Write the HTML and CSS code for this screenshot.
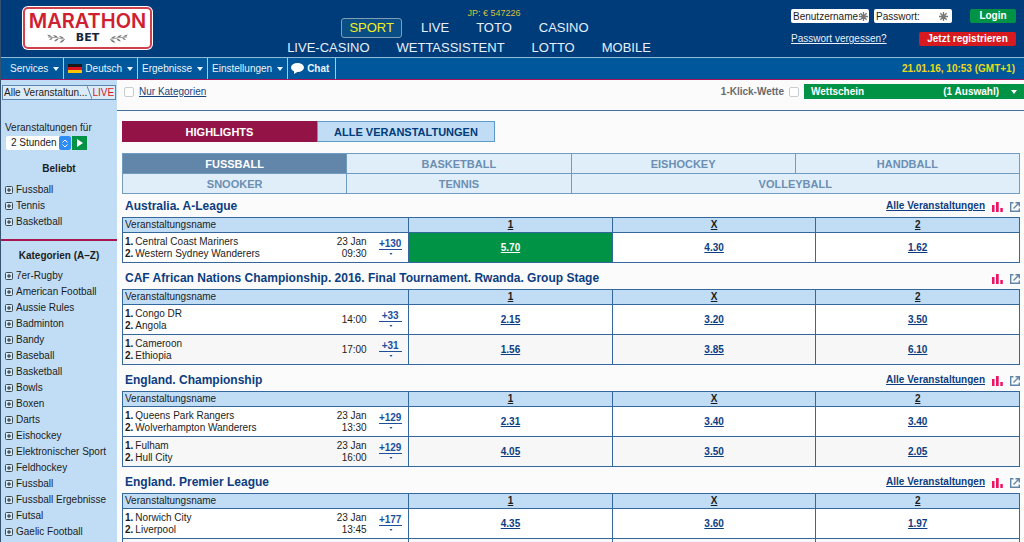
FILE: index.html
```html
<!DOCTYPE html>
<html lang="de">
<head>
<meta charset="utf-8">
<title>Marathonbet – Sport</title>
<link rel="stylesheet" href="styles.css">
</head>
<body>
<svg class="defs" width="0" height="0" aria-hidden="true">
  <symbol id="plus" viewBox="0 0 8 8"><rect x=".5" y=".5" width="7" height="7" rx="1" fill="#d5e8f8" stroke="#3c4a56"/><path d="M2 4h4M4 2v4" stroke="#1c2830"/></symbol>
  <symbol id="bars" viewBox="0 0 11 11"><path d="M0 4h2.500v7H0zM4 1h2.700v10H4zM8.300 7h2.500v4H8.300z" fill="#ee1464"/></symbol>
  <symbol id="open" viewBox="0 0 10 10"><path d="M3.500 .7H.7v8.600h8.600V6.500" fill="none" stroke="#6286a8" stroke-width="1.400"/><path d="M5.500 .7h3.800v3.800M9 1L3.500 6.500" fill="none" stroke="#6286a8" stroke-width="1.400"/></symbol>
  <symbol id="down" viewBox="0 0 6 4"><path d="M0 0h6L3 4z" fill="currentColor"/></symbol>
  <symbol id="star" viewBox="0 0 10 10"><path d="M5 0v10M0 5h10M1.500 1.500l7 7M8.500 1.500l-7 7" stroke="#777" stroke-width="1.500"/></symbol>
  <symbol id="laurel" viewBox="0 0 20 9"><path d="M2 3Q10 3 19 5.500" fill="none" stroke="#777" stroke-width=".7"/><path d="M1 .5Q4.500 .5 6 3Q2.500 3 1 .5zM7 1Q10.500 1 12 3.800Q8.500 3.500 7 1zM13 2Q16.500 2 18 4.800Q14.500 4.500 13 2zM3 6Q4.500 3.500 7 3.500Q6 6.200 3 6zM8 7.300Q9.500 4.700 12.500 4.500Q11.500 7.500 8 7.300zM13.500 8.600Q15 5.800 18.500 5.500Q17.500 8.800 13.500 8.600z" fill="#777"/></symbol>
</svg>

<div class="page">
  <header class="header">
    <a class="logo" href="#">
      <span class="logo-name">MARATHON</span>
      <span class="logo-sub"><svg width="20" height="9"><use href="#laurel"/></svg><b>BET</b><svg class="flip" width="20" height="9"><use href="#laurel"/></svg></span>
    </a>
    <nav class="main-nav" aria-label="Hauptmenü">
      <ul>
        <li><a class="active" href="#">SPORT</a></li>
        <li><a href="#">LIVE</a></li>
        <li class="jackpot-item"><span class="jackpot">JP: € 547226</span><a href="#">TOTO</a></li>
        <li><a href="#">CASINO</a></li>
      </ul>
      <ul>
        <li><a href="#">LIVE-CASINO</a></li>
        <li><a href="#">WETTASSISTENT</a></li>
        <li><a href="#">LOTTO</a></li>
        <li><a href="#">MOBILE</a></li>
      </ul>
    </nav>
    <form class="login">
      <div class="login-row">
        <div class="fields">
          <label class="field"><input type="text" placeholder="Benutzername:" aria-label="Benutzername"><svg class="star" width="9" height="9"><use href="#star"/></svg></label>
          <label class="field"><input type="password" placeholder="Passwort:" aria-label="Passwort"><svg class="star inset" width="9" height="9"><use href="#star"/></svg></label>
        </div>
        <button class="btn green" type="button">Login</button>
      </div>
      <div class="login-row">
        <a class="forgot" href="#">Passwort vergessen?</a>
        <button class="btn red" type="button">Jetzt registrieren</button>
      </div>
    </form>
  </header>

  <div class="menu">
    <button type="button">Services<svg width="6" height="4"><use href="#down"/></svg></button>
    <button type="button"><span class="flag"></span>Deutsch<svg width="6" height="4"><use href="#down"/></svg></button>
    <button type="button">Ergebnisse<svg width="6" height="4"><use href="#down"/></svg></button>
    <button type="button">Einstellungen<svg width="6" height="4"><use href="#down"/></svg></button>
    <button type="button" class="chat"><svg width="13" height="11" viewBox="0 0 13 11"><ellipse cx="6.500" cy="4.500" rx="6.500" ry="4.500" fill="#fff"/><path d="M3 7v4l5-3z" fill="#fff"/></svg>Chat</button>
    <time class="clock">21.01.16, 10:53 (GMT+1)</time>
  </div>

  <div class="body">
    <aside class="sidebar">
      <div class="scope"><a href="#">Alle Veranstaltun...</a><svg width="5" height="13" viewBox="0 0 5 13"><path d="M0 0l5 13" stroke="#5b86ad"/></svg><a class="live" href="#">LIVE</a></div>
      <form class="within">
        <label for="hours">Veranstaltungen für</label>
        <div class="within-row">
          <span class="select"><select id="hours"><option>2 Stunden</option></select><span class="stepper"><svg width="6" height="9" viewBox="0 0 6 9"><path d="M.5 3.500L3 1l2.500 2.500M.5 5.500L3 8l2.500-2.500" fill="none" stroke="#fff"/></svg></span></span>
          <button type="button" class="go" aria-label="Anzeigen"><svg width="6" height="8" viewBox="0 0 6 8"><path d="M0 0l6 4-6 4z" fill="#fff"/></svg></button>
        </div>
      </form>
      <h2>Beliebt</h2>
      <ul>
        <li><a href="#"><svg width="8" height="8"><use href="#plus"/></svg>Fussball</a></li>
        <li><a href="#"><svg width="8" height="8"><use href="#plus"/></svg>Tennis</a></li>
        <li><a href="#"><svg width="8" height="8"><use href="#plus"/></svg>Basketball</a></li>
      </ul>
      <h2 class="divided">Kategorien (A–Z)</h2>
      <ul>
        <li><a href="#"><svg width="8" height="8"><use href="#plus"/></svg>7er-Rugby</a></li>
        <li><a href="#"><svg width="8" height="8"><use href="#plus"/></svg>American Football</a></li>
        <li><a href="#"><svg width="8" height="8"><use href="#plus"/></svg>Aussie Rules</a></li>
        <li><a href="#"><svg width="8" height="8"><use href="#plus"/></svg>Badminton</a></li>
        <li><a href="#"><svg width="8" height="8"><use href="#plus"/></svg>Bandy</a></li>
        <li><a href="#"><svg width="8" height="8"><use href="#plus"/></svg>Baseball</a></li>
        <li><a href="#"><svg width="8" height="8"><use href="#plus"/></svg>Basketball</a></li>
        <li><a href="#"><svg width="8" height="8"><use href="#plus"/></svg>Bowls</a></li>
        <li><a href="#"><svg width="8" height="8"><use href="#plus"/></svg>Boxen</a></li>
        <li><a href="#"><svg width="8" height="8"><use href="#plus"/></svg>Darts</a></li>
        <li><a href="#"><svg width="8" height="8"><use href="#plus"/></svg>Eishockey</a></li>
        <li><a href="#"><svg width="8" height="8"><use href="#plus"/></svg>Elektronischer Sport</a></li>
        <li><a href="#"><svg width="8" height="8"><use href="#plus"/></svg>Feldhockey</a></li>
        <li><a href="#"><svg width="8" height="8"><use href="#plus"/></svg>Fussball</a></li>
        <li><a href="#"><svg width="8" height="8"><use href="#plus"/></svg>Fussball Ergebnisse</a></li>
        <li><a href="#"><svg width="8" height="8"><use href="#plus"/></svg>Futsal</a></li>
        <li><a href="#"><svg width="8" height="8"><use href="#plus"/></svg>Gaelic Football</a></li>
      </ul>
    </aside>

    <main class="main">
      <div class="toolbar">
        <label class="check"><input type="checkbox"><span class="link">Nur Kategorien</span></label>
        <label class="check one-click">1-Klick-Wette<input type="checkbox"></label>
        <button type="button" class="betslip"><span>Wettschein</span><span class="count">(1 Auswahl)</span><svg width="6" height="4"><use href="#down"/></svg></button>
      </div>
      <div class="content">
        <div class="tabs">
          <button type="button" class="tab active">HIGHLIGHTS</button>
          <button type="button" class="tab">ALLE VERANSTALTUNGEN</button>
        </div>
        <div class="sports">
          <button type="button" class="active">FUSSBALL</button>
          <button type="button">BASKETBALL</button>
          <button type="button">EISHOCKEY</button>
          <button type="button">HANDBALL</button>
          <button type="button">SNOOKER</button>
          <button type="button">TENNIS</button>
          <button type="button" class="wide">VOLLEYBALL</button>
        </div>

        <section class="league">
          <div class="league-head"><h3>Australia. A-League</h3><a href="#">Alle Veranstaltungen</a><svg width="11" height="11"><use href="#bars"/></svg><svg width="10" height="10"><use href="#open"/></svg></div>
          <table>
            <colgroup><col><col class="c-date"><col class="c-more"><col class="c-odd"><col class="c-odd"><col class="c-odd"></colgroup>
            <thead><tr><th colspan="3" class="name">Veranstaltungsname</th><th>1</th><th>X</th><th>2</th></tr></thead>
            <tbody>
              <tr><td class="teams"><b>1.</b>Central Coast Mariners<br><b>2.</b>Western Sydney Wanderers</td><td class="date">23 Jan<br>09:30</td><td class="more"><a href="#">+130</a><svg width="4" height="2"><use href="#down"/></svg></td><td class="odd picked"><a href="#">5.70</a></td><td class="odd"><a href="#">4.30</a></td><td class="odd"><a href="#">1.62</a></td></tr>
            </tbody>
          </table>
        </section>

        <section class="league">
          <div class="league-head"><h3>CAF African Nations Championship. 2016. Final Tournament. Rwanda. Group Stage</h3><svg width="11" height="11"><use href="#bars"/></svg><svg width="10" height="10"><use href="#open"/></svg></div>
          <table>
            <colgroup><col><col class="c-date"><col class="c-more"><col class="c-odd"><col class="c-odd"><col class="c-odd"></colgroup>
            <thead><tr><th colspan="3" class="name">Veranstaltungsname</th><th>1</th><th>X</th><th>2</th></tr></thead>
            <tbody>
              <tr><td class="teams"><b>1.</b>Congo DR<br><b>2.</b>Angola</td><td class="date">14:00</td><td class="more"><a href="#">+33</a><svg width="4" height="2"><use href="#down"/></svg></td><td class="odd"><a href="#">2.15</a></td><td class="odd"><a href="#">3.20</a></td><td class="odd"><a href="#">3.50</a></td></tr>
              <tr><td class="teams"><b>1.</b>Cameroon<br><b>2.</b>Ethiopia</td><td class="date">17:00</td><td class="more"><a href="#">+31</a><svg width="4" height="2"><use href="#down"/></svg></td><td class="odd"><a href="#">1.56</a></td><td class="odd"><a href="#">3.85</a></td><td class="odd"><a href="#">6.10</a></td></tr>
            </tbody>
          </table>
        </section>

        <section class="league">
          <div class="league-head"><h3>England. Championship</h3><a href="#">Alle Veranstaltungen</a><svg width="11" height="11"><use href="#bars"/></svg><svg width="10" height="10"><use href="#open"/></svg></div>
          <table>
            <colgroup><col><col class="c-date"><col class="c-more"><col class="c-odd"><col class="c-odd"><col class="c-odd"></colgroup>
            <thead><tr><th colspan="3" class="name">Veranstaltungsname</th><th>1</th><th>X</th><th>2</th></tr></thead>
            <tbody>
              <tr><td class="teams"><b>1.</b>Queens Park Rangers<br><b>2.</b>Wolverhampton Wanderers</td><td class="date">23 Jan<br>13:30</td><td class="more"><a href="#">+129</a><svg width="4" height="2"><use href="#down"/></svg></td><td class="odd"><a href="#">2.31</a></td><td class="odd"><a href="#">3.40</a></td><td class="odd"><a href="#">3.40</a></td></tr>
              <tr><td class="teams"><b>1.</b>Fulham<br><b>2.</b>Hull City</td><td class="date">23 Jan<br>16:00</td><td class="more"><a href="#">+129</a><svg width="4" height="2"><use href="#down"/></svg></td><td class="odd"><a href="#">4.05</a></td><td class="odd"><a href="#">3.50</a></td><td class="odd"><a href="#">2.05</a></td></tr>
            </tbody>
          </table>
        </section>

        <section class="league">
          <div class="league-head"><h3>England. Premier League</h3><a href="#">Alle Veranstaltungen</a><svg width="11" height="11"><use href="#bars"/></svg><svg width="10" height="10"><use href="#open"/></svg></div>
          <table>
            <colgroup><col><col class="c-date"><col class="c-more"><col class="c-odd"><col class="c-odd"><col class="c-odd"></colgroup>
            <thead><tr><th colspan="3" class="name">Veranstaltungsname</th><th>1</th><th>X</th><th>2</th></tr></thead>
            <tbody>
              <tr><td class="teams"><b>1.</b>Norwich City<br><b>2.</b>Liverpool</td><td class="date">23 Jan<br>13:45</td><td class="more"><a href="#">+177</a><svg width="4" height="2"><use href="#down"/></svg></td><td class="odd"><a href="#">4.35</a></td><td class="odd"><a href="#">3.60</a></td><td class="odd"><a href="#">1.97</a></td></tr>
              <tr><td class="teams"></td><td class="date"></td><td class="more"></td><td class="odd"></td><td class="odd"></td><td class="odd"></td></tr>
            </tbody>
          </table>
        </section>
      </div>
    </main>
  </div>
</div>
</body>
</html>
```

FILE: styles.css
```css
* { box-sizing: border-box; }

body {
  margin: 0;
  font: 10px/12px "Liberation Sans", Arial, sans-serif;
  color: #1c1c1c;
  background: #fbfbfb;
}

.defs { position: absolute; }
ul { list-style: none; margin: 0; padding: 0; }
h2, h3 { margin: 0; }
a { color: inherit; text-decoration: none; }
button, input, select { font: inherit; margin: 0; padding: 0; border: 0; }
svg { flex: none; }

.page {
  display: flex;
  flex-direction: column;
  height: 100vh;
  overflow: hidden;
  border-left: 1px solid #35536f;
}

/* Header */
.header {
  flex: none;
  display: grid;
  grid-template-columns: 155px 1fr 244px;
  height: 57px;
  background: #003b7a;
  color: #e6f1fa;
}

.logo {
  display: flex;
  flex-direction: column;
  align-items: center;
  align-self: start;
  gap: 1px;
  margin: 7px 4px 0 22px;
  padding: 2px 0 3px;
  border: 2px solid #d2404e;
  border-radius: 5px;
  background: #fff;
  box-shadow: 0 0 0 1px #fff;
}
.logo-name { font: 600 20px/20px Inter, sans-serif; color: #cf2030; }
.logo-sub { display: flex; align-items: center; gap: 10px; color: #16263c; }
.logo-sub b { font: bold 11px/12px "DejaVu Sans", sans-serif; }
.flip { transform: scaleX(-1); }

.main-nav { padding: 18px 0 0 2px; font-size: 13px; line-height: 18px; }
.main-nav ul { display: flex; justify-content: center; gap: 11px; }
.main-nav a { display: block; padding: 0 7px; border: 1px solid transparent; border-radius: 3px; }
.main-nav .active { color: #f0f020; border-color: #7f9fb5; background: #0b4d85; }
.jackpot-item { position: relative; }
.jackpot {
  position: absolute;
  bottom: 100%;
  left: 50%;
  transform: translate(-50%, 1px);
  white-space: nowrap;
  font-size: 9px;
  line-height: 12px;
  color: #d2c23c;
}

.login { display: flex; flex-direction: column; gap: 9px; padding: 9px 8px 0 11px; }
.login-row { display: flex; justify-content: space-between; align-items: center; }
.fields { display: flex; gap: 5px; }
.field { position: relative; display: flex; width: 78px; }
.field input { width: 100%; height: 14px; padding: 0 2px; border-radius: 2px; background: #fff; }
.field input::placeholder { color: #1c1c1c; opacity: 1; }
.star { position: absolute; right: 1px; top: 3px; }
.star.inset { right: 4px; }
.btn { height: 14px; border-radius: 2px; color: #fff; font-weight: bold; }
.green { width: 46px; background: #009245; }
.red { width: 97px; background: #d71920; }
.forgot { text-decoration: underline; }

/* Menu strip */
.menu {
  flex: none;
  display: flex;
  border-top: 1px solid #8fbbd8;
  border-bottom: 1px solid #a8165a;
  height: 23px;
  background: #00579c;
}
.menu button {
  display: flex;
  align-items: center;
  gap: 5px;
  padding: 0 4px;
  border-right: 1px solid #a9cbe2;
  background: none;
  color: #eaf4fb;
}
.menu button:first-child { padding-left: 9px; }
.menu .chat { gap: 3px; padding: 0 6px 0 3px; font-weight: bold; }
.flag {
  width: 14px;
  height: 9px;
  margin-right: -2px;
  background: linear-gradient(#1a1a1a 33%, #d9141e 33% 66%, #f7c600 66%);
}
.clock { margin-left: auto; align-self: center; padding-right: 9px; font-weight: bold; color: #ecd91c; }

.body { flex: 1; display: flex; min-height: 0; }

/* Sidebar */
.sidebar { flex: none; width: 116px; overflow: hidden; background: #c1ddf5; }
.scope {
  display: flex;
  justify-content: space-between;
  margin: 5px 1px 0 1px;
  padding: 0 2px 0 1px;
  border: 1px solid #5b86ad;
  background: #dcebf8;
  line-height: 13px;
  white-space: nowrap;
}
.scope .live { color: #d71920; }
.within { padding: 22px 4px 0; }
.within-row { display: flex; gap: 1px; padding-left: 1px; margin-top: 2px; }
.select { position: relative; display: flex; width: 65px; height: 14px; background: #fff; border-radius: 2px; }
.select select { appearance: none; width: 100%; padding-left: 5px; background: none; color: #1c1c1c; }
.stepper {
  position: absolute;
  right: 0;
  top: 0;
  display: grid;
  place-items: center;
  width: 12px;
  height: 14px;
  border-radius: 2px;
  background: #2f8df5;
  pointer-events: none;
}
.go { display: grid; place-items: center; width: 15px; height: 14px; background: #009245; }
.sidebar h2 { padding: 13px 0; font-size: 10px; line-height: 12px; text-align: center; }
.sidebar h2 + ul { margin-top: -6px; }
.sidebar h2.divided { margin-top: 9px; padding: 9px 0 12px; border-top: 2px solid #a8164f; }
.sidebar li { line-height: 16px; }
.sidebar li a { display: flex; align-items: center; gap: 3px; padding-left: 4px; white-space: nowrap; }

/* Main column */
.main { flex: 1; min-width: 0; overflow: hidden; }
.toolbar {
  display: flex;
  align-items: center;
  height: 31px;
  padding: 0 0 7px 7px;
  border-bottom: 1px solid #46709c;
}
.check { display: flex; align-items: center; gap: 5px; }
.check input { appearance: none; width: 10px; height: 10px; border: 1px solid #c9cdd2; border-radius: 2px; background: #fff; }
.link { color: #17457c; text-decoration: underline; }
.one-click { margin-left: auto; padding-right: 5px; font-weight: bold; color: #6a6a6a; }
.betslip {
  display: flex;
  align-items: center;
  width: 220px;
  height: 15px;
  padding: 0 7px;
  background: #009245;
  color: #fff;
  font-weight: bold;
}
.count { margin-left: auto; padding-right: 12px; }

.content { padding: 10px 4px 0 5px; }
.tabs { display: flex; font-size: 11px; font-weight: bold; }
.tab {
  width: 178px;
  height: 21px;
  border: 1px solid #5e9ac6;
  background: #c1ddf5;
  color: #003b7a;
  font-size: 11px;
}
.tab.active { width: 195px; border-color: #931347; background: #931347; color: #fff; }

.sports {
  display: grid;
  grid-template-columns: repeat(4, 1fr);
  gap: 1px;
  margin-top: 11px;
  border: 1px solid #6f9cc0;
  background: #6f9cc0;
}
.sports button { height: 19px; background: #e0eefa; color: #6b8eb2; font-size: 11px; font-weight: bold; }
.sports .active { background: #6286aa; color: #fff; }
.sports .wide { grid-column: span 2; }

/* Leagues */
.league + .league { margin-top: 3px; }
.league-head { display: flex; align-items: center; height: 23px; padding-left: 3px; gap: 7px; }
.league-head h3 { flex: 1; font-size: 12px; line-height: 14px; color: #0d3d80; }
.league-head a { font-weight: bold; color: #0d3d80; text-decoration: underline; }
.league-head svg { margin-top: 2px; }

table { width: 100%; table-layout: fixed; border-collapse: collapse; border: 1px solid #34689c; }
th, td { padding: 0; }
th { line-height: 14px; border: 1px solid #34689c; background: #c1ddf5; text-decoration: underline; }
th.name { padding-left: 2px; text-align: left; font-weight: normal; text-decoration: none; }
tbody tr { height: 30px; background: #fff; border-top: 1px solid #34689c; }
tbody tr:nth-child(even) { background: #f7f7f7; }
.c-date { width: 50px; }
.c-more { width: 34px; }
.c-odd { width: 22.7%; }
.teams { padding: 3px 0 2px 2px; white-space: nowrap; }
.teams b { margin-right: 2px; }
.date { padding: 3px 8px 2px 0; text-align: right; }
.more { padding: 0 0 3px 4px; text-align: center; color: #1b4f9c; font-weight: bold; }
.more a { display: block; width: 23px; border-bottom: 1px solid #1b4f9c; line-height: 11px; }
.more svg { display: block; margin: 3px 0 0 10px; }
.odd { border-left: 1px solid #34689c; text-align: center; }
.odd a { color: #0d3d80; font-weight: bold; text-decoration: underline; }
.picked { background: #009245; }
.picked a { color: #fff; }
```
